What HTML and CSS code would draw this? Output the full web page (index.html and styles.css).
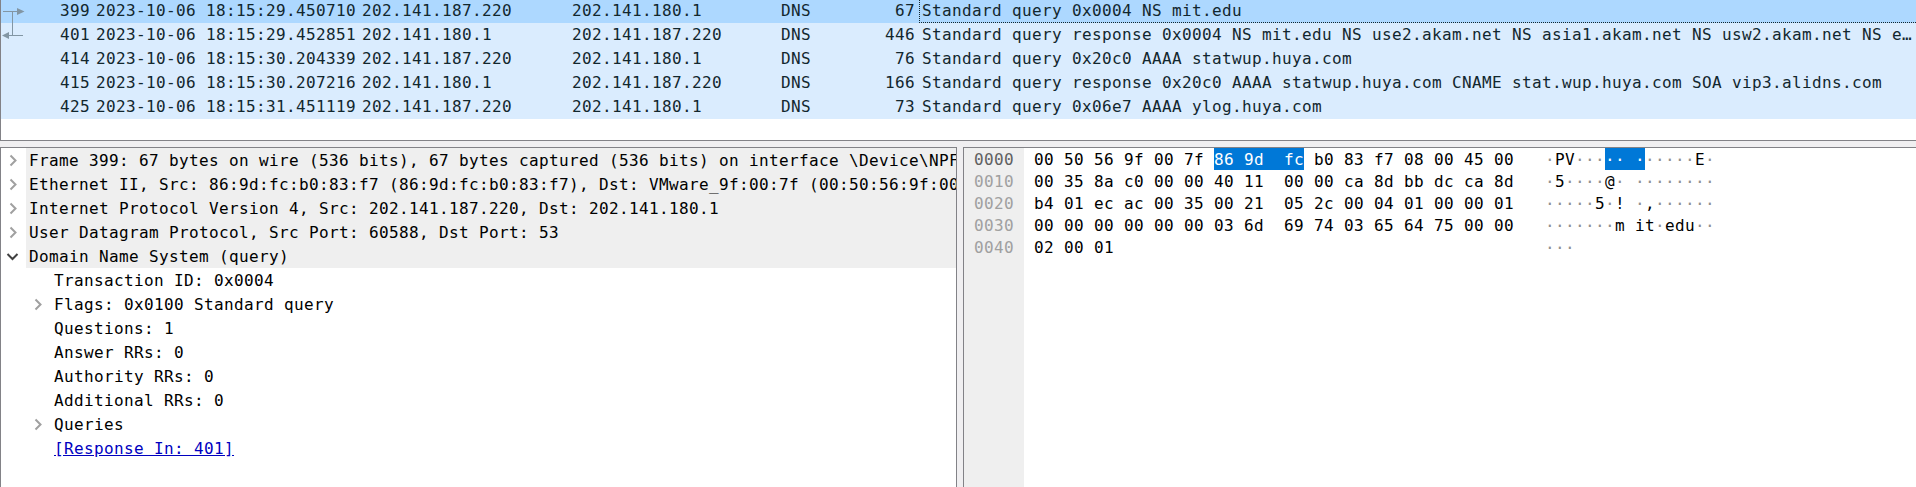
FILE: index.html
```html
<!DOCTYPE html>
<html lang="en">
<head>
<meta charset="utf-8">
<title>Packet capture</title>
<link rel="stylesheet" href="styles.css">
</head>
<body>
<main class="app">
  <section class="packets">
    <div class="packet selected"><svg class="rel" viewBox="0 0 26 24"><path d="M2 12.5H18M11.5 12.5V24" /><path class="head" d="M16 9L23.5 12.5L16 16Z"/></svg><span class="num">399</span><span>2023-10-06 18:15:29.450710</span><span>202.141.187.220</span><span>202.141.180.1</span><span>DNS</span><span class="num">67</span><span class="info">Standard query 0x0004 NS mit.edu</span></div>
    <div class="packet"><svg class="rel" viewBox="0 0 26 24"><path d="M7 12.5H22M11.5 0V12.5"/><path class="head" d="M8 9L1 12.5L8 16Z"/></svg><span class="num">401</span><span>2023-10-06 18:15:29.452851</span><span>202.141.180.1</span><span>202.141.187.220</span><span>DNS</span><span class="num">446</span><span class="info">Standard query response 0x0004 NS mit.edu NS use2.akam.net NS asia1.akam.net NS usw2.akam.net NS e…</span></div>
    <div class="packet"><i></i><span class="num">414</span><span>2023-10-06 18:15:30.204339</span><span>202.141.187.220</span><span>202.141.180.1</span><span>DNS</span><span class="num">76</span><span class="info">Standard query 0x20c0 AAAA statwup.huya.com</span></div>
    <div class="packet"><i></i><span class="num">415</span><span>2023-10-06 18:15:30.207216</span><span>202.141.180.1</span><span>202.141.187.220</span><span>DNS</span><span class="num">166</span><span class="info">Standard query response 0x20c0 AAAA statwup.huya.com CNAME stat.wup.huya.com SOA vip3.alidns.com</span></div>
    <div class="packet"><i></i><span class="num">425</span><span>2023-10-06 18:15:31.451119</span><span>202.141.187.220</span><span>202.141.180.1</span><span>DNS</span><span class="num">73</span><span class="info">Standard query 0x06e7 AAAA ylog.huya.com</span></div>
  </section>
  <div class="lower">
    <section class="tree">
      <div class="node"><svg class="arrow" viewBox="0 0 25 24"><path d="M9.5 7.5L14.5 12.5L9.5 17.5"/></svg><span class="label top">Frame 399: 67 bytes on wire (536 bits), 67 bytes captured (536 bits) on interface \Device\NPF</span></div>
      <div class="node"><svg class="arrow" viewBox="0 0 25 24"><path d="M9.5 7.5L14.5 12.5L9.5 17.5"/></svg><span class="label top">Ethernet II, Src: 86:9d:fc:b0:83:f7 (86:9d:fc:b0:83:f7), Dst: VMware_9f:00:7f (00:50:56:9f:00</span></div>
      <div class="node"><svg class="arrow" viewBox="0 0 25 24"><path d="M9.5 7.5L14.5 12.5L9.5 17.5"/></svg><span class="label top">Internet Protocol Version 4, Src: 202.141.187.220, Dst: 202.141.180.1</span></div>
      <div class="node"><svg class="arrow" viewBox="0 0 25 24"><path d="M9.5 7.5L14.5 12.5L9.5 17.5"/></svg><span class="label top">User Datagram Protocol, Src Port: 60588, Dst Port: 53</span></div>
      <div class="node"><svg class="arrow open" viewBox="0 0 25 24"><path d="M6.5 10L11.5 15L16.5 10"/></svg><span class="label top">Domain Name System (query)</span></div>
      <div class="node child"><span class="arrow"></span><span class="label">Transaction ID: 0x0004</span></div>
      <div class="node child"><svg class="arrow" viewBox="0 0 25 24"><path d="M9.5 7.5L14.5 12.5L9.5 17.5"/></svg><span class="label">Flags: 0x0100 Standard query</span></div>
      <div class="node child"><span class="arrow"></span><span class="label">Questions: 1</span></div>
      <div class="node child"><span class="arrow"></span><span class="label">Answer RRs: 0</span></div>
      <div class="node child"><span class="arrow"></span><span class="label">Authority RRs: 0</span></div>
      <div class="node child"><span class="arrow"></span><span class="label">Additional RRs: 0</span></div>
      <div class="node child"><svg class="arrow" viewBox="0 0 25 24"><path d="M9.5 7.5L14.5 12.5L9.5 17.5"/></svg><span class="label">Queries</span></div>
      <div class="node child"><span class="arrow"></span><span class="label"><a class="link">[Response In: 401]</a></span></div>
    </section>
    <section class="hex">
      <pre class="offsets"><span class="current">0000</span>
0010
0020
0030
0040</pre>
      <pre class="bytes">00 50 56 9f 00 7f <mark>86 9d  fc</mark> b0 83 f7 08 00 45 00
00 35 8a c0 00 00 40 11  00 00 ca 8d bb dc ca 8d
b4 01 ec ac 00 35 00 21  05 2c 00 04 01 00 00 01
00 00 00 00 00 00 03 6d  69 74 03 65 64 75 00 00
02 00 01</pre>
      <pre class="ascii">·<b>PV</b>···<mark>·· ·</mark>·····<b>E</b>·
·<b>5</b>····<b>@</b>· ········
·····<b>5</b>·<b>!</b> ·<b>,</b>······
·······<b>m it</b>·<b>edu</b>··
···</pre>
    </section>
  </div>
</main>
</body>
</html>
```
FILE: styles.css
```css
* { box-sizing: border-box; }
body {
  margin: 0;
  background: #f0eff1;
  font-family: Consolas, "DejaVu Sans Mono", monospace;
  font-size: 16px;
  letter-spacing: 0.368px;
  color: #000;
}
.app {
  display: flex;
  flex-direction: column;
  gap: 6px;
  width: 100%;
  height: 487px;
  overflow: hidden;
}
.packets {
  height: 141px;
  overflow: hidden;
  background: #fff;
  border-left: 1px solid #828287;
  border-bottom: 1px solid #828287;
}
.packet {
  display: grid;
  grid-template-columns: 26px 63px 266px 210px 209px 101px 39px 1fr;
  height: 24px;
  line-height: 24px;
  white-space: pre;
  background: #daecfe;
  color: #12272e;
}
.packet > span { padding-left: 6px; }
.packet.selected { height: 23px; line-height: 22px; background: #add8ff; }
.packet .num { padding-left: 0; text-align: right; }
.packet > .info { margin-left: 4px; padding-left: 3px; }
.selected > .info { border: 1px dotted #12272e; border-top: 0; border-right: 0; padding-left: 2px; }
.rel { width: 26px; height: 24px; fill: none; stroke: #8296a4; }
.rel .head { fill: #8296a4; stroke: none; }
.selected .rel { margin-top: -1px; }
.lower { display: flex; gap: 6px; flex: 1; min-height: 0; }
.tree {
  width: 957px;
  overflow: hidden;
  background: #fff;
  border: 1px solid #828287;
  border-bottom: 0;
}
.node { display: flex; height: 24px; line-height: 26px; white-space: pre; }
.child { padding-left: 25px; }
.arrow { flex: none; width: 25px; height: 24px; fill: none; stroke: #a0a0a0; stroke-width: 2; }
.arrow.open { stroke: #404040; }
.label { flex: 1; padding-left: 3px; }
.label.top { background: #efefef; }
.link { color: #0000c0; text-decoration: underline; }
.hex {
  display: flex;
  flex: 1;
  background: #fff;
  border: 1px solid #828287;
  border-right: 0;
  border-bottom: 0;
}
.hex pre { margin: 0; padding-top: 1px; font: inherit; line-height: 22px; }
.hex .offsets { width: 60px; padding-left: 10px; background: #efefef; color: #a0a0a0; }
.current { color: #606060; }
.hex .bytes { width: 521px; padding-left: 10px; }
.hex .ascii { color: #909090; }
.ascii b { font-weight: normal; color: #000; }
mark { padding: 2px 0 1px; background: #0078d7; color: #fff; }
```
